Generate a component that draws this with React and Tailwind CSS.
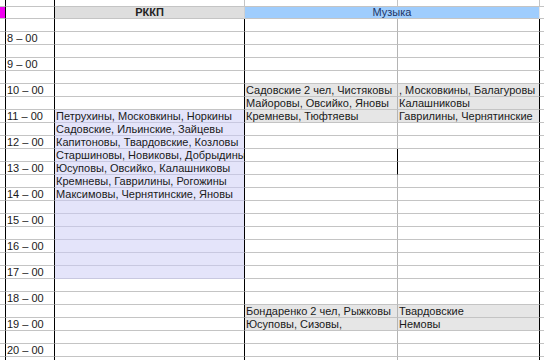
const rows = [
  {},
  { t: '8 – 00' },
  {},
  { t: '9 – 00' },
  {},
  { t: '10 – 00', a: 'Садовские 2 чел, Чистяковы', b: ', Московкины, Балагуровы', g: true },
  { a: 'Майоровы, Овсийко, Яновы', b: 'Калашниковы', g: true },
  { t: '11 – 00', r: 'Петрухины, Московкины, Норкины', a: 'Кремневы, Тюфтяевы', b: 'Гаврилины, Чернятинские', g: true, l: true },
  { r: 'Садовские, Ильинские, Зайцевы', l: true },
  { t: '12 – 00', r: 'Капитоновы, Твардовские, Козловы', l: true },
  { r: 'Старшиновы, Новиковы, Добрыдины', l: true, d: true },
  { t: '13 – 00', r: 'Юсуповы, Овсийко, Калашниковы', l: true, d: true },
  { r: 'Кремневы, Гаврилины, Рогожины', l: true },
  { t: '14 – 00', r: 'Максимовы, Чернятинские, Яновы', l: true },
  { l: true },
  { t: '15 – 00', l: true },
  { l: true },
  { t: '16 – 00', l: true },
  { l: true },
  { t: '17 – 00', l: true },
  {},
  { t: '18 – 00' },
  { a: 'Бондаренко 2 чел, Рыжковы', b: 'Твардовские', g: true },
  { t: '19 – 00', a: 'Юсуповы, Сизовы,', b: 'Немовы', g: true },
  {},
  { t: '20 – 00' },
  {},
];

const cols = 'grid grid-cols-[6px_49px_190px_153px_142px_1fr]';
const cell = 'overflow-hidden whitespace-nowrap border-b border-[#c4c4c4] pl-[1px] leading-[12px]';

export default function App() {
  return (
    <div
      className="h-[360px] w-[544px] overflow-hidden bg-white text-[11px] text-[#1a1a1a]"
      style={{ fontFamily: '"Liberation Sans", Arial, sans-serif' }}
    >
      {/* top cut-off row */}
      <div className={`${cols} h-[7px]`}>
        <div className="border-b border-r border-[#c4c4c4] border-r-black" />
        <div className="border-b border-r border-[#c4c4c4] border-r-black" />
        <div className="border-b border-r border-[#c4c4c4]" />
        <div className="border-b border-r border-[#c4c4c4]" />
        <div className="border-b border-r border-[#c4c4c4]" />
        <div className="border-b border-[#c4c4c4]" />
      </div>

      {/* header */}
      <div className={`${cols} h-[12px]`}>
        <div className="border-b border-r border-[#c4c4c4] border-r-black bg-[#f000f0]" />
        <div className="border-b border-r border-[#c4c4c4] border-r-black" />
        <div className="border-b border-r border-[#c4c4c4] border-r-[#d0d0d0] bg-[#dedede] text-center font-bold leading-[11px] text-[#222]">
          РККП
        </div>
        <div className="col-span-2 border-b border-r border-[#c4c4c4] border-r-[#e4e4e4] bg-[#9fcdfd] text-center leading-[11px] text-[#1c3566]">
          Музыка
        </div>
        <div className="border-b border-[#c4c4c4]" />
      </div>

      {rows.map((row, i) => (
        <div key={i} className={`${cols} h-[13px]`}>
          <div className="border-b border-r border-[#c4c4c4] border-r-black" />
          <div className={`${cell} border-r border-r-black`}>{row.t}</div>
          <div className={`${cell} border-r border-r-black ${row.l ? 'bg-[#e4e4fa] border-b-[#c8c8e0]' : ''}`}>{row.r}</div>
          <div className={`${cell} border-r ${row.d ? 'border-r-black' : 'border-r-[#b4b4b4]'} ${row.g ? 'bg-[#e6e6e6]' : ''}`}>{row.a}</div>
          <div className={`${cell} border-r border-r-black ${row.g ? 'bg-[#e6e6e6]' : ''}`}>{row.b}</div>
          <div className="border-b border-[#c4c4c4]" />
        </div>
      ))}
    </div>
  );
}
